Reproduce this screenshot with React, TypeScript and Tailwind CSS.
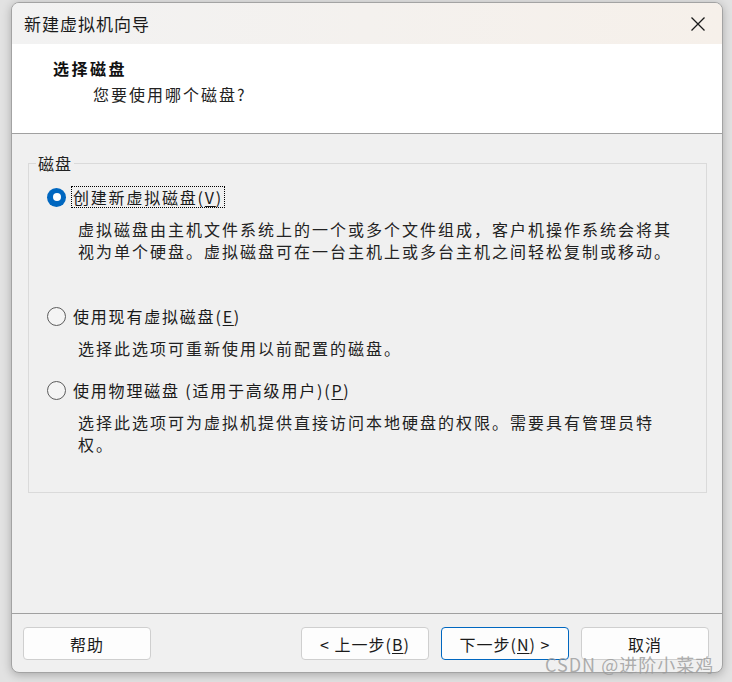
import React from "react"

const cjk = "font-['Noto_Sans_CJK_SC',sans-serif]"

function Radio({ checked }: { checked?: boolean }) {
  if (checked) {
    return (
      <span className="w-[19px] h-[19px] rounded-full bg-[#0067c0] flex items-center justify-center shrink-0">
        <span className="w-[8px] h-[8px] rounded-full bg-white" />
      </span>
    )
  }
  return <span className="w-[19px] h-[19px] rounded-full border border-[#5c5c5c] bg-[#f4f4f4] shrink-0" />
}

function Option({
  checked,
  label,
  hotkey,
  focused,
  lines,
  className = "",
}: {
  checked?: boolean
  label: string
  hotkey: string
  focused?: boolean
  lines: string[]
  className?: string
}) {
  return (
    <div className={className}>
      <div className="flex items-center h-[24px] ml-[18px]">
        <Radio checked={checked} />
        <span
          className={`ml-[5px] px-[1px] leading-[20px] tracking-[1.8px] ${
            focused ? "border border-dotted border-black" : "border border-transparent"
          }`}
        >
          {label}(<span className="underline underline-offset-2">{hotkey}</span>)
        </span>
      </div>
      <p className="mt-[9px] ml-[49px] leading-[22px] tracking-[2px] text-[#222]">
        {lines.map((l, i) => (
          <span key={i} className="block whitespace-nowrap">
            {l}
          </span>
        ))}
      </p>
    </div>
  )
}

function Button({
  children,
  primary,
  className = "",
}: {
  children: React.ReactNode
  primary?: boolean
  className?: string
}) {
  return (
    <button
      className={`w-[128px] h-[33px] rounded-[4px] bg-[#fdfdfd] text-[16px] leading-[20px] text-[#1b1b1b] flex items-center justify-center tracking-[1px] ${
        primary ? "border border-[#0067c0]" : "border border-[#cfcfcf]"
      } ${className}`}
    >
      {children}
    </button>
  )
}

export default function App() {
  return (
    <div className={`relative w-[732px] h-[682px] bg-[#e2e2e2] overflow-hidden ${cjk}`}>
      <div className="ml-[11px] mt-[2px] w-[712px] h-[671px] border border-[#a3a3a3] rounded-[8px] overflow-hidden flex flex-col bg-[#f0f0f0] shadow-[0_2px_10px_rgba(0,0,0,0.25)]">
        {/* title bar */}
        <div className="h-[41px] flex items-center justify-between bg-linear-to-r from-[#f2f2f2] to-[#f6f0ea]">
          <span className="pl-[12px] text-[17px] tracking-[1px] text-[#1a1a1a]">新建虚拟机向导</span>
          <svg width="16" height="16" viewBox="0 0 16 16" className="mr-[16px] mt-[1px]">
            <path d="M1.5 1.5 L14.5 14.5 M14.5 1.5 L1.5 14.5" stroke="#1a1a1a" strokeWidth="1.3" />
          </svg>
        </div>

        {/* header */}
        <div className="h-[90px] bg-white border-b border-[#a0a0a0] pt-[11px]">
          <div className="pl-[41px] text-[16px] font-bold leading-[26px] tracking-[2.5px] text-[#111]">选择磁盘</div>
          <div className="pl-[81px] text-[16px] leading-[26px] tracking-[2px] text-[#222]">您要使用哪个磁盘?</div>
        </div>

        {/* body */}
        <div className="flex-1 text-[16px] text-[#1a1a1a]">
          <div className="relative mt-[29px] ml-[16px] mr-[15px] h-[330px] border border-[#dadada] pt-[21px]">
            <span className="absolute left-[7px] top-[-11px] px-[2px] bg-[#f0f0f0] leading-[20px] tracking-[1px] text-[#222]">
              磁盘
            </span>
            <Option
              checked
              focused
              label="创建新虚拟磁盘"
              hotkey="V"
              lines={[
                "虚拟磁盘由主机文件系统上的一个或多个文件组成，客户机操作系统会将其",
                "视为单个硬盘。虚拟磁盘可在一台主机上或多台主机之间轻松复制或移动。",
              ]}
            />
            <Option
              className="mt-[42px]"
              label="使用现有虚拟磁盘"
              hotkey="E"
              lines={["选择此选项可重新使用以前配置的磁盘。"]}
            />
            <Option
              className="mt-[19px]"
              label="使用物理磁盘 (适用于高级用户)"
              hotkey="P"
              lines={["选择此选项可为虚拟机提供直接访问本地硬盘的权限。需要具有管理员特", "权。"]}
            />
          </div>
        </div>

        {/* footer */}
        <div className="h-[59px] border-t border-[#a0a0a0] flex items-start pt-[13px] px-[11px]">
          <Button>帮助</Button>
          <div className="ml-auto flex gap-[12px] mr-[2px]">
            <Button>
              &lt; 上一步(<span className="underline underline-offset-2">B</span>)
            </Button>
            <Button primary>
              下一步(<span className="underline underline-offset-2">N</span>) &gt;
            </Button>
            <Button>取消</Button>
          </div>
        </div>
      </div>

      {/* watermark */}
      <span className="absolute left-[545px] top-[656px] text-[18px] leading-[16px] tracking-[1px] text-[#9a9a9a]/80 whitespace-nowrap">
        CSDN @进阶小菜鸡
      </span>
    </div>
  )
}
